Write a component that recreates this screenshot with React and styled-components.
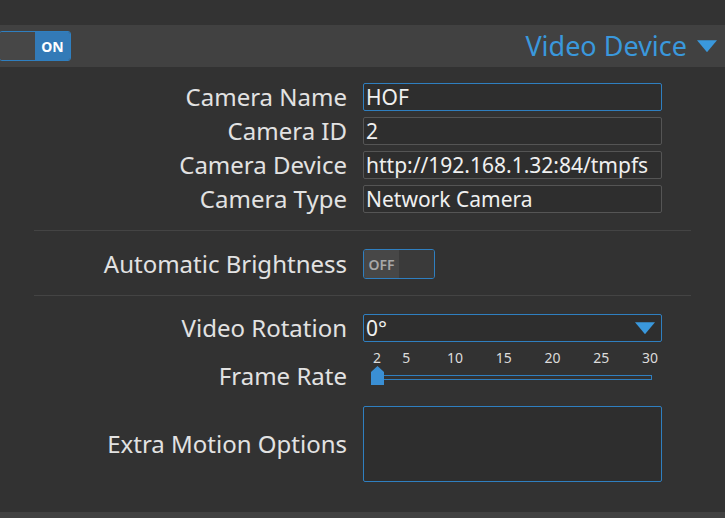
import React from "react";
import styled, { createGlobalStyle } from "styled-components";

const GlobalStyle = createGlobalStyle`
  html, body {
    margin: 0;
    padding: 0;
    background: #323232;
    font-family: "Noto Sans", "DejaVu Sans", sans-serif;
    overflow: hidden;
  }
`;

const Page = styled.div`
  width: 725px;
  height: 518px;
  background: #323232;
  display: flex;
  flex-direction: column;
`;

const TopGap = styled.div`
  height: 25px;
  background: #333333;
`;

const Header = styled.div`
  height: 42px;
  background: #414141;
  display: flex;
  align-items: center;
  justify-content: space-between;
  padding-right: 8px;
`;

const Title = styled.div`
  display: flex;
  align-items: center;
  gap: 10px;
  color: #3a98dc;
  font-size: 27px;
  line-height: 32px;
`;

const Toggle = styled.div`
  width: ${(p) => p.$width}px;
  height: 28px;
  border: 1px solid #2f7fc0;
  border-radius: 3px;
  display: flex;
  overflow: hidden;
  margin-left: ${(p) => p.$offset || 0}px;
`;

const ToggleHalf = styled.div`
  flex: 1;
  display: flex;
  align-items: center;
  justify-content: center;
  font-size: 14px;
  font-weight: ${(p) => (p.$on ? 700 : 600)};
  background: ${(p) => (p.$on ? "#337ab7" : p.$lit ? "#474747" : "#3a3a3a")};
  color: ${(p) => (p.$on ? "#ffffff" : "#a8a8a8")};
`;

const Body = styled.div`
  flex: 1;
  padding: 16px 34px 0 34px;
`;

const Section = styled.div`
  display: grid;
  grid-template-columns: 313px 299px;
  column-gap: 16px;
  row-gap: ${(p) => p.$gap || 6}px;
  padding: ${(p) => p.$pad || "0"};
  border-bottom: ${(p) => (p.$line ? "1px solid #444444" : "none")};
  width: 657px;
  box-sizing: border-box;
  align-items: center;
`;

const Label = styled.div`
  text-align: right;
  color: #e2e2e2;
  font-size: 24px;
  line-height: 28px;
  white-space: nowrap;
  margin: ${(p) => p.$margin || "0"};
`;

const Input = styled.div`
  height: 28px;
  box-sizing: border-box;
  border: 1px solid ${(p) => (p.$focus ? "#2f7fc0" : "#555555")};
  border-radius: 2px;
  background: #2e2e2e;
  color: #f0f0f0;
  font-size: 21px;
  line-height: 26px;
  padding-left: 2px;
  white-space: nowrap;
  overflow: hidden;
`;

const Select = styled(Input)`
  display: flex;
  align-items: center;
  justify-content: space-between;
  padding-right: 6px;
  border-color: #2f7fc0;
`;

const TextArea = styled.div`
  height: 76px;
  box-sizing: border-box;
  border: 1px solid #2f7fc0;
  border-radius: 2px;
  background: #2e2e2e;
`;

const Slider = styled.div`
  position: relative;
  height: 38px;
  margin-top: -14px;
`;

const Tick = styled.span`
  position: absolute;
  top: 0;
  transform: translateX(-50%);
  color: #dcdcdc;
  font-size: 14px;
`;

const Track = styled.div`
  position: absolute;
  left: 14px;
  right: 10px;
  top: 27px;
  height: 5px;
  box-sizing: border-box;
  border: 1px solid #2f7fc0;
`;

const Handle = styled.svg`
  position: absolute;
  left: 8px;
  top: 18px;
`;

const BottomBar = styled.div`
  height: 6px;
  background: #414141;
`;

const Caret = ({ size = 20 }) => (
  <svg width={size} height={size * 0.62} viewBox="0 0 20 12">
    <polygon points="0,0 20,0 10,12" fill="#3a98dc" />
  </svg>
);

const ticks = [2, 5, 10, 15, 20, 25, 30];

export default function App() {
  return (
    <Page>
      <GlobalStyle />
      <TopGap />
      <Header>
        <Toggle $width={70} $offset={-1}>
          <ToggleHalf $lit />
          <ToggleHalf $on>ON</ToggleHalf>
        </Toggle>
        <Title>
          Video Device
          <Caret />
        </Title>
      </Header>
      <Body>
        <Section $line $pad="0 0 17px 0">
          <Label>Camera Name</Label>
          <Input $focus>HOF</Input>
          <Label>Camera ID</Label>
          <Input>2</Input>
          <Label>Camera Device</Label>
          <Input>http://192.168.1.32:84/tmpfs</Input>
          <Label>Camera Type</Label>
          <Input>Network Camera</Input>
        </Section>
        <Section $line $pad="18px 0 16px 0">
          <Label>Automatic Brightness</Label>
          <Toggle $width={70}>
            <ToggleHalf $lit>OFF</ToggleHalf>
            <ToggleHalf />
          </Toggle>
        </Section>
        <Section $pad="18px 0 0 0" $gap={20}>
          <Label>Video Rotation</Label>
          <Select>
            0°
            <Caret />
          </Select>
          <Label $margin="-2px 0 -6px 0">Frame Rate</Label>
          <Slider>
            {ticks.map((t) => (
              <Tick key={t} style={{ left: 14 + ((t - 2) / 28) * 273 }}>
                {t}
              </Tick>
            ))}
            <Track />
            <Handle width="13" height="19" viewBox="0 0 13 19">
              <polygon points="6.5,0 13,6 13,19 0,19 0,6" fill="#3a8fd4" />
            </Handle>
          </Slider>
          <Label>Extra Motion Options</Label>
          <TextArea />
        </Section>
      </Body>
      <BottomBar />
    </Page>
  );
}
